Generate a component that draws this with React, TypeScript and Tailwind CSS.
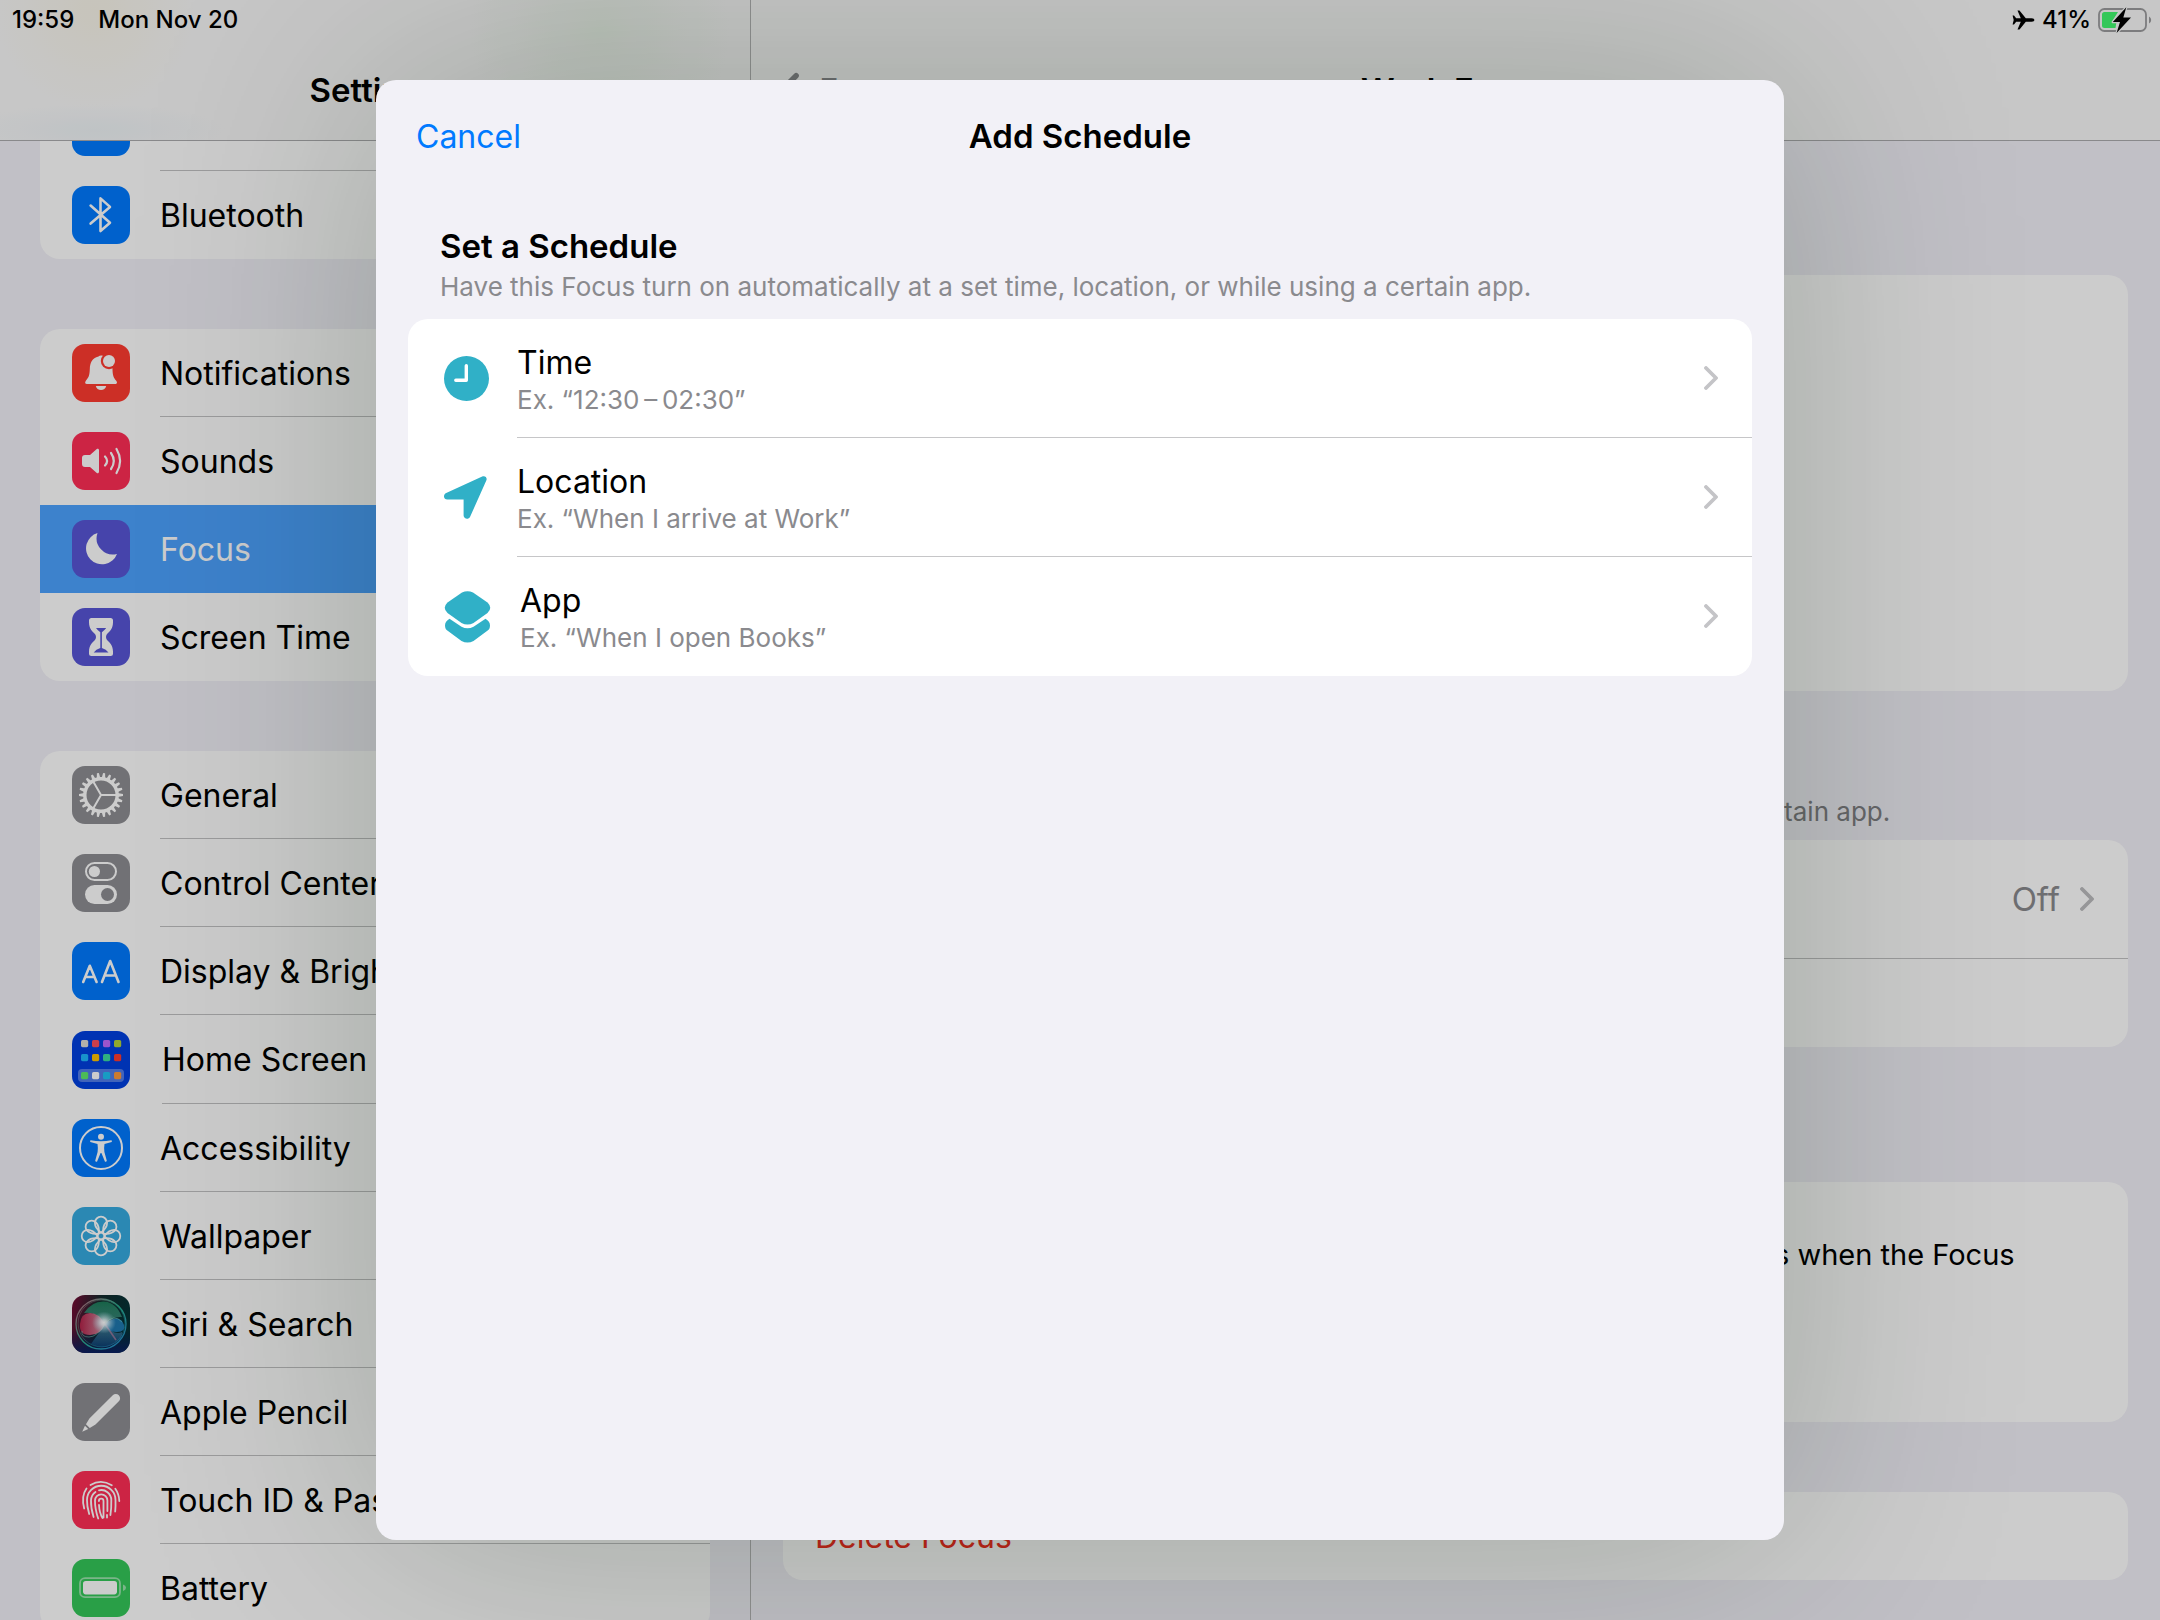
import type { ReactNode } from 'react';

function Tile({ color, children }: { color: string; children: ReactNode }) {
  return (
    <svg className="size-[58px] shrink-0" viewBox="0 0 58 58" fill="none" aria-hidden="true">
      <rect width="58" height="58" rx="13" fill={color} />
      {children}
    </svg>
  );
}

const line = { stroke: '#fff', strokeLinecap: 'round', strokeLinejoin: 'round' } as const;

function WifiIcon() {
  return (
    <Tile color="#007aff">
      <g {...line} strokeWidth="4">
        <path d="M11 24q18-15 36 0M17 31q12-10 24 0M23 37.5q6-5 12 0" />
      </g>
      <circle cx="29" cy="41" r="2" fill="#fff" />
    </Tile>
  );
}

function BluetoothIcon() {
  return (
    <Tile color="#007aff">
      <path d="M18.6 19.6 38 36.7 28.5 45V12.4L38 20.9 18.6 37.6" {...line} strokeWidth="2.6" />
    </Tile>
  );
}

function BellIcon() {
  return (
    <Tile color="#ff3b30">
      <path
        d="M26.5 12.5C20 14 18 19 17.8 25c-.2 6-.8 8-3.8 11.5-1.5 2-1 3.5 1 3.5h28c2 0 2.800-1.500 1-3.500-2.500-3-3.400-5.500-3.500-11.500C40.200 17 36 12 31 11.800c-2-.6-3.500-.3-4.500.7Z"
        fill="#fff"
      />
      <path d="M23.800 42h10.400c-.6 2.600-2.600 4-5.200 4s-4.600-1.400-5.200-4Z" fill="#fff" />
      <circle cx="37" cy="17" r="8.200" fill="#ff3b30" />
      <circle cx="37" cy="17" r="6" fill="#fff" />
    </Tile>
  );
}

function SoundIcon() {
  return (
    <Tile color="#ff2d55">
      <path
        d="M10 26a3 3 0 0 1 3-3h5l6.500-5.800c1.200-1 2.500-.4 2.500 1v21.600c0 1.400-1.300 2-2.500 1L18 35h-5a3 3 0 0 1-3-3Z"
        fill="#fff"
      />
      <path d="M33 24.500q4.200 4.500 0 9M39 21q5.600 8 0 16M44.500 17q7.200 12 0 24" {...line} strokeWidth="2.200" />
    </Tile>
  );
}

function MoonIcon() {
  return (
    <Tile color="#5856d6">
      <path d="M25.500 13A16 16 0 1 0 45 34 16.300 16.300 0 0 1 25.500 13Z" fill="#fff" />
    </Tile>
  );
}

function HourglassIcon() {
  return (
    <Tile color="#5856d6">
      <path
        d="M19.500 10h19q2.500 0 2.500 2.500v2C41 21 37 24 35 26q-2 3 0 6c2 2 6 5 6 11.500v2q0 2.500-2.500 2.500h-19q-2.500 0-2.500-2.500v-2C17 37 21 34 23 32q2-3 0-6c-2-2-6-5-6-11.500v-2q0-2.500 2.500-2.500Z"
        fill="#fff"
      />
      <path d="M24 20h10.200q-2.200 2.800-4.300 4.300V40q4.300 1 6.600 4.600H21.700Q24 41 28.300 40V24.300Q26 22.800 24 20Z" fill="#5856d6" />
    </Tile>
  );
}

const TEETH = Array.from({ length: 22 }, (_, i) => (i * 360) / 22);

function GearIcon() {
  return (
    <Tile color="#8e8e93">
      <circle cx="29" cy="29" r="16.200" stroke="#fff" strokeWidth="3.400" />
      {TEETH.map((angle) => (
        <path key={angle} d="M45.500 27.100 51 28V30L45.500 30.900Z" fill="#fff" transform={`rotate(${angle} 29 29)`} />
      ))}
      <path d="M29 29H44M29 29 21.500 16M29 29 21.500 42" stroke="#fff" strokeWidth="2" />
    </Tile>
  );
}

function TogglesIcon() {
  return (
    <Tile color="#8e8e93">
      <rect x="14" y="9" width="30" height="17" rx="8.500" stroke="#fff" strokeWidth="2" />
      <circle cx="22.400" cy="17.500" r="5.600" fill="#fff" />
      <rect x="13" y="31" width="32" height="19" rx="9.500" fill="#fff" />
      <circle cx="35.500" cy="40.500" r="6.500" fill="#8e8e93" />
    </Tile>
  );
}

function TextSizeIcon() {
  return (
    <Tile color="#007aff">
      <path d="M11.200 40 17.800 23.800 24.600 40M13.500 35H22.400M30 40 38.200 19 46.500 40M33 33.500H43.500" {...line} strokeWidth="2.600" />
    </Tile>
  );
}

const APP_SQUARES = [
  [9, 9, '#e0dcd6'], [20, 9, '#ff4f5e'], [31, 9, '#c069ff'], [42, 9, '#b5d438'],
  [9, 23, '#1fb8ff'], [20, 23, '#ffc400'], [31, 23, '#3cdba0'], [42, 23, '#ff3b30'],
  [9, 41, '#5fec6e'], [20, 41, '#ffffff'], [31, 41, '#1fc4f4'], [42, 41, '#ff9a3c'],
] as const;

function HomeScreenIcon() {
  return (
    <Tile color="#0040e0">
      <rect x="6" y="38" width="46" height="13" rx="4" fill="#fff" fillOpacity=".32" />
      {APP_SQUARES.map(([x, y, fill]) => (
        <rect key={`${x}-${y}`} x={x} y={y} width="7.200" height="7.200" rx="1.600" fill={fill} />
      ))}
    </Tile>
  );
}

function AccessibilityIcon() {
  return (
    <Tile color="#007aff">
      <circle cx="29" cy="29" r="21" stroke="#fff" strokeWidth="2" />
      <circle cx="29" cy="17.800" r="3" fill="#fff" />
      <path
        d="M18.600 21.300q-.9.600-.3 1.600l7.200 2q.7 4 .1 8l-2.400 8.800q.4 1.600 1.900.9L28.600 34h.8l3.500 8.600q1.500.7 1.900-.9l-2.400-8.800q-.6-4 .1-8l7.200-2q.6-1-.3-1.600-10.400 1.900-20.800 0Z"
        fill="#fff"
      />
    </Tile>
  );
}

function WallpaperIcon() {
  return (
    <Tile color="#36aae0">
      <g stroke="#fff" strokeWidth="1.800">
        {[0, 45, 90, 135, 180, 225, 270, 315].map((angle) => (
          <path
            key={angle}
            d="M29 25.600Q22.900 21 22.900 15.800A6.100 6.100 0 0 1 35.100 15.800Q35.100 21 29 25.600Z"
            transform={`rotate(${angle} 29 29)`}
          />
        ))}
        <circle cx="29" cy="29" r="3.400" />
      </g>
    </Tile>
  );
}

function SiriIcon() {
  return (
    <svg className="size-[58px] shrink-0" viewBox="0 0 58 58" fill="none" aria-hidden="true">
      <defs>
        <linearGradient id="siri-base" x1="0" y1="0" x2="1" y2=".2">
          <stop offset="0" stopColor="#780a34" />
          <stop offset=".5" stopColor="#122a2c" />
          <stop offset="1" stopColor="#053236" />
        </linearGradient>
        <linearGradient id="siri-floor" x1="0" y1="0" x2="0" y2="1">
          <stop offset=".6" stopColor="#0a1c5a" stopOpacity="0" />
          <stop offset="1" stopColor="#0b1f68" stopOpacity=".9" />
        </linearGradient>
        <linearGradient id="siri-top" x1="0" y1="0" x2="0" y2="1">
          <stop offset="0" stopColor="#1c7a58" />
          <stop offset="1" stopColor="#4fb09a" stopOpacity=".6" />
        </linearGradient>
        <linearGradient id="siri-bottom" x1="0" y1="0" x2="0" y2="1">
          <stop offset="0" stopColor="#5aa0c0" stopOpacity=".7" />
          <stop offset="1" stopColor="#0c4a80" stopOpacity=".7" />
        </linearGradient>
        <linearGradient id="siri-rose" x1="0" y1="0" x2="1" y2="0">
          <stop offset="0" stopColor="#c8264f" />
          <stop offset="1" stopColor="#f2a0b8" />
        </linearGradient>
        <linearGradient id="siri-ring" x1="0" y1="0" x2="1" y2="1">
          <stop offset="0" stopColor="#d87088" />
          <stop offset=".5" stopColor="#2ec8a0" />
          <stop offset="1" stopColor="#2a90e8" />
        </linearGradient>
        <radialGradient id="siri-glow">
          <stop offset="0" stopColor="#fff" />
          <stop offset=".25" stopColor="#f0fbff" stopOpacity=".85" />
          <stop offset="1" stopColor="#a8dfea" stopOpacity="0" />
        </radialGradient>
      </defs>
      <rect width="58" height="58" rx="13" fill="url(#siri-base)" />
      <rect width="58" height="58" rx="13" fill="url(#siri-floor)" />
      <path d="M12 18Q20 6 32 6.500T50 22Q42 21 33 28 24 16 12 18Z" fill="url(#siri-top)" />
      <path d="M33 29 19 49Q29 55 40 50T50 37Q42 41 33 29Z" fill="url(#siri-bottom)" />
      <path d="M33 29Q27 18 18 18T8 29 18 40 33 29Z" fill="url(#siri-rose)" fillOpacity=".85" />
      <path d="M33 29Q39 23.500 44.500 23.500T52 30 45 37 33 29Z" fill="#2790d8" fillOpacity=".75" />
      <path d="M33 29Q25 42 17 42T10 36M33 29Q42 18 50 27" stroke="#7fe0d0" strokeOpacity=".5" />
      <path d="M33 29 44 45" stroke="#f08ab0" strokeWidth="1.600" strokeOpacity=".5" />
      <circle cx="29" cy="29" r="25" stroke="url(#siri-ring)" strokeWidth="1.300" strokeOpacity=".85" />
      <circle cx="29.500" cy="28.500" r="23.400" stroke="url(#siri-ring)" strokeOpacity=".4" />
      <ellipse cx="32" cy="27.500" rx="12" ry="11" fill="url(#siri-glow)" />
    </svg>
  );
}

function PencilIcon() {
  return (
    <Tile color="#8e8e93">
      <path
        d="M0-4.300H33L39.500-2.700V2.700L33 4.300H0A4.300 4.300 0 0 1 0-4.300ZM41.300-2.300 47.500 0 41.300 2.300Z"
        fill="#fff"
        transform="translate(43.800 15.200) rotate(135)"
      />
    </Tile>
  );
}

function TouchIdIcon() {
  return (
    <Tile color="#ff2d55">
      <g {...line} strokeWidth="1.800">
        <path d="M18.500 14Q29 7.500 39.800 14.300" />
        <path d="M14.500 17.500Q9 25 12.200 37.500M43.300 17.800Q47 23 47.300 30" />
        <path d="M17.200 43Q14.800 35 15 29A14.200 14.200 0 0 1 43.500 29Q43.700 36 43.200 40.500" />
        <path d="M21.600 46Q18.800 37 19 29.500 19.200 24 23.500 21M27 19.300A10 10 0 0 1 39.300 29Q39.500 38 38.400 44" />
        <path d="M26.200 47.500Q22.900 38 23 29.500A6.200 6.200 0 0 1 35.400 29.500V40M35 44V46.500" />
        <path d="M26.900 30A2.300 2.300 0 0 1 31.500 30V46.500M27 34Q27.400 42 30.500 47" />
      </g>
    </Tile>
  );
}

function BatteryTileIcon() {
  return (
    <Tile color="#34c759">
      <rect x="8" y="19.200" width="40" height="19" rx="5" stroke="#fff" strokeOpacity=".5" strokeWidth="1.800" />
      <rect x="11" y="22" width="34" height="13.400" rx="2.800" fill="#fff" />
      <path d="M51 25.500Q54 26.500 54 28.700T51 32Z" fill="#fff" fillOpacity=".5" />
    </Tile>
  );
}

function Chevron({ className }: { className: string }) {
  return (
    <svg className={className} viewBox="0 0 14 24" fill="none" aria-hidden="true">
      <path d="M2 2 12 12 2 22" stroke="currentColor" strokeWidth="3.800" strokeLinecap="round" strokeLinejoin="round" />
    </svg>
  );
}

type Item = { label: string; icon: ReactNode; active?: boolean; tall?: boolean };

const GROUPS: Item[][] = [
  [
    { label: 'Wi-Fi', icon: <WifiIcon /> },
    { label: 'Bluetooth', icon: <BluetoothIcon /> },
  ],
  [
    { label: 'Notifications', icon: <BellIcon /> },
    { label: 'Sounds', icon: <SoundIcon /> },
    { label: 'Focus', icon: <MoonIcon />, active: true },
    { label: 'Screen Time', icon: <HourglassIcon /> },
  ],
  [
    { label: 'General', icon: <GearIcon /> },
    { label: 'Control Center', icon: <TogglesIcon /> },
    { label: 'Display & Brightness', icon: <TextSizeIcon /> },
    { label: 'Home Screen & App Library', icon: <HomeScreenIcon />, tall: true },
    { label: 'Accessibility', icon: <AccessibilityIcon /> },
    { label: 'Wallpaper', icon: <WallpaperIcon /> },
    { label: 'Siri & Search', icon: <SiriIcon /> },
    { label: 'Apple Pencil', icon: <PencilIcon /> },
    { label: 'Touch ID & Passcode', icon: <TouchIdIcon /> },
    { label: 'Battery', icon: <BatteryTileIcon /> },
  ],
];

function SidebarRow({ item, divided }: { item: Item; divided: boolean }) {
  return (
    <li className={item.active ? 'bg-[#4da3ff] text-white' : ''}>
      <a
        href="#"
        aria-current={item.active ? 'page' : undefined}
        className={`flex items-center pl-8 ${item.tall ? 'h-[89px] gap-8' : 'h-[88px] gap-[30px]'}`}
      >
        {item.icon}
        <span
          className={`flex flex-1 items-center self-stretch whitespace-nowrap border-b pt-0.5 ${
            divided ? 'border-[#c2c2c4]' : 'border-transparent'
          }`}
        >
          {item.label}
        </span>
      </a>
    </li>
  );
}

function Sidebar() {
  return (
    <aside className="flex w-[751px] shrink-0 flex-col border-r border-[#b4b4b6]">
      <header className="flex h-[141px] shrink-0 items-center justify-center border-b border-[#acacae] bg-[radial-gradient(circle_at_95px_10px,#f9f6ea,transparent_100px),radial-gradient(ellipse_at_95px_130px,#eff4f7,transparent_130px),radial-gradient(circle_at_600px_30px,#edf5ec,transparent_130px)] bg-[#f9f9f9] pt-10">
        <h1 className="text-[33px] font-semibold">Settings</h1>
      </header>
      <nav aria-label="Settings" className="min-h-0 flex-1 overflow-hidden px-10">
        <div className="-mt-[58px] flex flex-col gap-[70px]">
          {GROUPS.map((group, g) => (
            <ul key={g} className="overflow-hidden rounded-[20px] bg-white">
              {group.map((item, i) => (
                <SidebarRow
                  key={item.label}
                  item={item}
                  divided={i < group.length - 1 && !item.active && !group[i + 1].active}
                />
              ))}
            </ul>
          ))}
        </div>
      </nav>
    </aside>
  );
}

const SCHEDULE_NOTE = 'Have this Focus turn on automatically at a set time, location, or while using a certain app.';

function Detail() {
  return (
    <main className="flex min-w-0 flex-1 flex-col">
      <header className="grid h-[141px] shrink-0 grid-cols-[1fr_auto_1fr] items-center border-b border-[#acacae] bg-[#f9f9f9] px-7 pt-10">
        <button type="button" className="flex items-center gap-5 justify-self-start text-[33px] text-[#8a8a8e]">
          <Chevron className="h-10 w-5 rotate-180" />
          Focus
        </button>
        <h2 className="text-[33px] font-semibold">Work Focus</h2>
      </header>
      <div className="min-h-0 flex-1 overflow-hidden px-8 pt-[134px]">
        <section className="h-[416px] rounded-[20px] bg-white" />
        <section className="pt-[60px]">
          <h3 className="px-8 text-[33px] font-semibold">Set a Schedule</h3>
          <p className="mt-1 px-4 text-[26px] leading-[34px] text-[#808084]">{SCHEDULE_NOTE}</p>
          <ul className="mt-[11px] overflow-hidden rounded-[20px] bg-white">
            <li className="border-b border-[#c2c2c4]">
              <button type="button" className="flex h-[118px] w-full items-center justify-between pr-[34px] pl-8">
                <span>Time</span>
                <span className="flex items-center gap-5 text-[33px] text-[#8a8a8e]">
                  Off
                  <Chevron className="h-6 w-3.5 text-[#bcbcbe]" />
                </span>
              </button>
            </li>
            <li>
              <button type="button" className="h-[88px] w-full px-8 text-left text-[#007aff]">
                Add Schedule
              </button>
            </li>
          </ul>
        </section>
        <section className="pt-[76px]">
          <h3 className="px-8 text-[33px] font-semibold">Focus Filters</h3>
          <p className="mt-[19px] h-[240px] rounded-[20px] bg-white px-24 pt-[53px] text-center text-[29px]">
            Focus filters let you adjust the behavior of your apps and devices when the Focus
            <br />
            is on.
          </p>
        </section>
        <section className="pt-[70px]">
          <button type="button" className="h-[88px] w-full rounded-[20px] bg-white px-8 pt-0.5 text-left text-[#ee2d20]">
            Delete Focus
          </button>
        </section>
      </div>
    </main>
  );
}

function StatusBar() {
  return (
    <div className="absolute inset-x-0 top-0 z-20 flex h-10 items-center justify-between pr-2 pl-3 text-2xl font-medium">
      <div className="flex gap-6">
        <span>19:59</span>
        <span>Mon Nov 20</span>
      </div>
      <div className="flex items-center gap-[7px]">
        <svg className="h-[22px] w-[23px]" viewBox="0 0 23 22" aria-label="Airplane mode">
          <path d="M22.500 11q-.4 1.700-3 1.700h-5.700L7.500 20.500H5.500L8.800 12.700H4.200L2 15.400H.6L1.700 11 .6 6.600H2l2.200 2.700h4.600L5.500 1.500h2l6.300 7.800h5.700q2.600 0 3 1.700Z" />
        </svg>
        <span>41%</span>
        <svg className="h-[26px] w-[54px]" viewBox="0 0 54 26" fill="none" aria-label="Battery charging">
          <rect x="1" y="2" width="47" height="22" rx="5.500" stroke="#7c7c7e" strokeWidth="1.800" />
          <path d="M6.500 5H20L14 14.500H18.500L17.500 21H6.500Q4 21 4 18.500V7.500Q4 5 6.500 5Z" fill="#34c759" />
          <path d="M51 9.500Q53.200 10.500 53.200 13T51 16.500Z" fill="#7c7c7e" />
          <path d="M28.300.2 14.800 15H22L18.600 26 33 10.600H25.300Z" fill="#000" stroke="#c6c7c7" strokeWidth="2.400" paintOrder="stroke" strokeLinejoin="round" />
        </svg>
      </div>
    </div>
  );
}

const teal = '#30b0c7';

const OPTIONS = [
  {
    title: 'Time',
    example: 'Ex. “12:30\u2009–\u200902:30”',
    icon: (
      <svg className="h-[45px] w-[45px] shrink-0" viewBox="0 0 45 45" fill="none" aria-hidden="true">
        <circle cx="22.500" cy="22.500" r="22.500" fill={teal} />
        <path d="M22.300 9.800V24.200H11.800" {...line} strokeWidth="3.400" />
      </svg>
    ),
  },
  {
    title: 'Location',
    example: 'Ex. “When I arrive at Work”',
    icon: (
      <svg className="h-[45px] w-[45px] shrink-0" viewBox="0 0 45 45" aria-hidden="true">
        <path
          d="M38.200 1.500c2.900-1.200 5.400 1.100 4.100 4.100L26 42c-1.500 2.900-6.400 2-6.400-1.400v-16H3.300c-4 0-4.400-5-1.100-6.500Z"
          fill={teal}
        />
      </svg>
    ),
  },
  {
    title: 'App',
    example: 'Ex. “When I open Books”',
    icon: (
      <svg className="h-[52px] w-12 shrink-0" viewBox="0 0 48 52" fill={teal} aria-hidden="true">
        <path d="M18 1.600Q23.500-1.200 29 1.600L43.500 11.500Q49 16.800 43.500 22L29.500 32Q23.500 35 17.500 32L3.500 22Q-2 16.800 3.500 11.500Z" />
        <path d="M5.500 27.800 17.500 35.800Q23.500 38.800 29.500 35.800L41.500 27.800Q46 30.500 46 34.500T43 40L29.500 50Q23.500 53 17.500 50L4 40Q1 38.500 1 34.500T5.500 27.800Z" />
      </svg>
    ),
  },
];

function ScheduleSheet() {
  return (
    <div className="absolute inset-0 z-10 flex justify-center bg-black/20 py-20">
      <div
        role="dialog"
        aria-modal="true"
        aria-labelledby="sheet-title"
        className="h-full w-full max-w-[1408px] rounded-[20px] bg-[#f2f1f7] px-8 shadow-[0_0_240px_rgba(0,30,5,0.22)]"
      >
        <header className="grid h-28 grid-cols-[1fr_auto_1fr] items-center px-2">
          <button type="button" className="justify-self-start pt-0.5 text-[#007aff]">
            Cancel
          </button>
          <h2 id="sheet-title" className="text-[33px] font-semibold">
            Add Schedule
          </h2>
        </header>
        <div className="px-8 pt-[34px]">
          <h3 className="text-[33px] font-semibold">Set a Schedule</h3>
          <p className="mt-1 text-[26px] leading-[34px] text-[#8a8a8e]">{SCHEDULE_NOTE}</p>
        </div>
        <ul className="mt-[15px] overflow-hidden rounded-[20px] bg-white">
          {OPTIONS.map((option, i) => (
            <li key={option.title}>
              <button type="button" className="flex h-[119px] w-full items-center gap-7 pl-9 text-left">
                {option.icon}
                <span
                  className={`flex flex-1 items-center justify-between self-stretch border-b pr-[34px] ${
                    i < OPTIONS.length - 1 ? 'border-[#c6c6c8]' : 'border-transparent'
                  }`}
                >
                  <span className="flex flex-col pt-[3px]">
                    <span>{option.title}</span>
                    <span className="text-[26px] leading-[34px] text-[#8a8a8e]">{option.example}</span>
                  </span>
                  <Chevron className="h-6 w-3.5 text-[#c4c4c7]" />
                </span>
              </button>
            </li>
          ))}
        </ul>
      </div>
    </div>
  );
}

export default function App() {
  return (
    <div className="relative flex h-screen overflow-hidden bg-[#f2f1f8] font-['Inter',sans-serif] text-[32px] leading-10 text-black">
      <Sidebar />
      <Detail />
      <ScheduleSheet />
      <StatusBar />
    </div>
  );
}
